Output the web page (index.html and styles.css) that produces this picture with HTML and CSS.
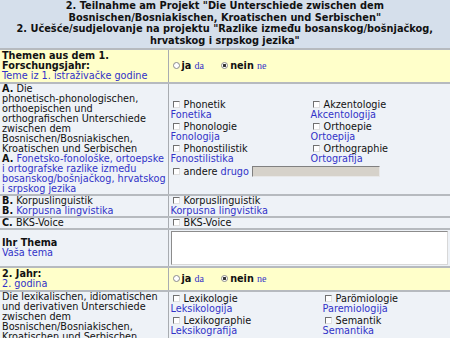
FILE: index.html
```html
<!DOCTYPE html>
<html lang="de">
<head>
    <meta charset="UTF-8">
    <title>Teilnahme am Projekt</title>
    <link rel="stylesheet" href="styles.css">
</head>
<body>
    <div class="frame">
        <table class="form">
            <tr>
                <th colspan="2" class="head">
                    2. Teilnahme am Projekt "Die Unterschiede zwischen dem<br>
                    Bosnischen/Bosniakischen, Kroatischen und Serbischen"<br>
                    2. Učešće/sudjelovanje na projektu "Razlike između bosanskog/bošnjačkog,<br>
                    hrvatskog i srpskog jezika"
                </th>
            </tr>

            <tr class="year">
                <td class="label"><b>Themen aus dem 1.<br>Forschungsjahr:</b><br><span class="bs">Teme iz 1. istraživačke godine</span></td>
                <td class="value">
                    <span class="rb"></span><b>ja</b> <span class="sr">da</span>
                    <span class="gap"></span>
                    <span class="rb on"></span><b>nein</b> <span class="sr">ne</span>
                </td>
            </tr>

            <tr class="topic">
                <td class="label">
                    <b>A.</b> Die<br>
                    phonetisch-phonologischen,<br>
                    orthoepischen und<br>
                    orthografischen Unterschiede<br>
                    zwischen dem<br>
                    Bosnischen/Bosniakischen,<br>
                    Kroatischen und Serbischen<br>
                    <b>A.</b> <span class="bs">Fonetsko-fonološke, ortoepske<br>
                    i ortografske razlike između<br>
                    bosanskog/bošnjačkog, hrvatskog<br>
                    i srpskog jezika</span>
                </td>
                <td class="value">
                    <div class="opts opts-a">
                        <div class="opt"><div><span class="cb"></span>Phonetik</div><div class="bs">Fonetika</div></div>
                        <div class="opt"><div><span class="cb"></span>Akzentologie</div><div class="bs">Akcentologija</div></div>
                        <div class="opt"><div><span class="cb"></span>Phonologie</div><div class="bs">Fonologija</div></div>
                        <div class="opt"><div><span class="cb"></span>Orthoepie</div><div class="bs">Ortoepija</div></div>
                        <div class="opt"><div><span class="cb"></span>Phonostilistik</div><div class="bs">Fonostilistika</div></div>
                        <div class="opt"><div><span class="cb"></span>Orthographie</div><div class="bs">Ortografija</div></div>
                        <div class="opt other"><span class="cb"></span>andere <span class="bs">drugo</span> <span class="field"></span></div>
                    </div>
                </td>
            </tr>

            <tr class="topic">
                <td class="label"><b>B.</b> Korpuslinguistik<br><b>B.</b> <span class="bs">Korpusna lingvistika</span></td>
                <td class="value"><div><span class="cb"></span>Korpuslinguistik</div><div class="bs">Korpusna lingvistika</div></td>
            </tr>

            <tr class="topic">
                <td class="label"><b>C.</b> BKS-Voice</td>
                <td class="value"><div><span class="cb"></span>BKS-Voice</div></td>
            </tr>

            <tr class="topic">
                <td class="label"><b>Ihr Thema</b><br><span class="bs">Vaša tema</span></td>
                <td class="value"><textarea class="theme"></textarea></td>
            </tr>

            <tr class="year">
                <td class="label"><b>2. Jahr:</b><br><span class="bs">2. godina</span></td>
                <td class="value">
                    <span class="rb"></span><b>ja</b> <span class="sr">da</span>
                    <span class="gap"></span>
                    <span class="rb on"></span><b>nein</b> <span class="sr">ne</span>
                </td>
            </tr>

            <tr class="topic">
                <td class="label">
                    Die lexikalischen, idiomatischen<br>
                    und derivativen Unterschiede<br>
                    zwischen dem<br>
                    Bosnischen/Bosniakischen,<br>
                    Kroatischen und Serbischen
                </td>
                <td class="value top">
                    <div class="opts opts-b">
                        <div class="opt"><div><span class="cb"></span>Lexikologie</div><div class="bs">Leksikologija</div></div>
                        <div class="opt"><div><span class="cb"></span>Parömiologie</div><div class="bs">Paremiologija</div></div>
                        <div class="opt"><div><span class="cb"></span>Lexikographie</div><div class="bs">Leksikografija</div></div>
                        <div class="opt"><div><span class="cb"></span>Semantik</div><div class="bs">Semantika</div></div>
                    </div>
                </td>
            </tr>
        </table>
    </div>
</body>
</html>
```

FILE: styles.css
```css
body {
    margin: 0;
    background: #fff;
    font-family: "DejaVu Sans", Verdana, sans-serif;
    font-size: 9.7px;
    line-height: 10px;
    color: #111;
}
.frame {
    width: 448px;
    border-right: 2px solid #3a3a3a;
}
.form {
    width: 100%;
    border-collapse: collapse;
}
.form td,
.form th {
    padding: 0 2px;
    border-bottom: 2px solid #b6babf;
    vertical-align: middle;
    text-align: left;
    white-space: nowrap;
}
.head {
    background: #d5dfeb;
    font-size: 9.8px;
    line-height: 11.7px;
    font-weight: bold;
    text-align: center !important;
    padding: 0 2px 1px !important;
}
.year td {
    background: #ffffca;
    padding: 1px 2px;
}
.topic td {
    background: #eef2f7;
}
.label {
    width: 162px;
    border-right: 1px solid #a8acb1;
}
.value.top {
    vertical-align: top;
}
.bs {
    color: #3232c8;
}
.sr {
    font-family: "Liberation Serif", serif;
    font-size: 10px;
    color: #3232c8;
}
.gap {
    display: inline-block;
    width: 9px;
}
.rb {
    display: inline-block;
    width: 5px;
    height: 5px;
    margin: 0 2px;
    border: 1px solid #8a8a8a;
    border-radius: 50%;
    background: #fff;
    vertical-align: 0;
}
.rb.on {
    background: radial-gradient(circle, #333 0 1.4px, #fff 1.6px);
}
.cb {
    display: inline-block;
    width: 5px;
    height: 5px;
    margin: 0 4px 0 2px;
    border: 1px solid #e0e0e0;
    border-left-color: #707070;
    border-top-color: #707070;
    background: #fff;
    vertical-align: 0;
}
.opts {
    display: grid;
}
.opts-a {
    grid-template-columns: 140px 1fr;
}
.opts-b {
    grid-template-columns: 152px 1fr;
    padding-top: 1px;
}
.opt {
    padding: 1px 0;
}
.other {
    grid-column: 1 / 3;
}
.field {
    display: inline-block;
    width: 126px;
    height: 9px;
    background: #d6d2ca;
    border: 1px solid #e8e8e8;
    border-left-color: #808080;
    border-top-color: #808080;
    vertical-align: -2px;
}
.theme {
    display: block;
    box-sizing: border-box;
    width: 277px;
    height: 34px;
    margin: 1px 0;
    border: 1px solid #d8d8d8;
    border-left-color: #8c8c8c;
    border-top-color: #8c8c8c;
    background: #fff;
    resize: none;
}
```
